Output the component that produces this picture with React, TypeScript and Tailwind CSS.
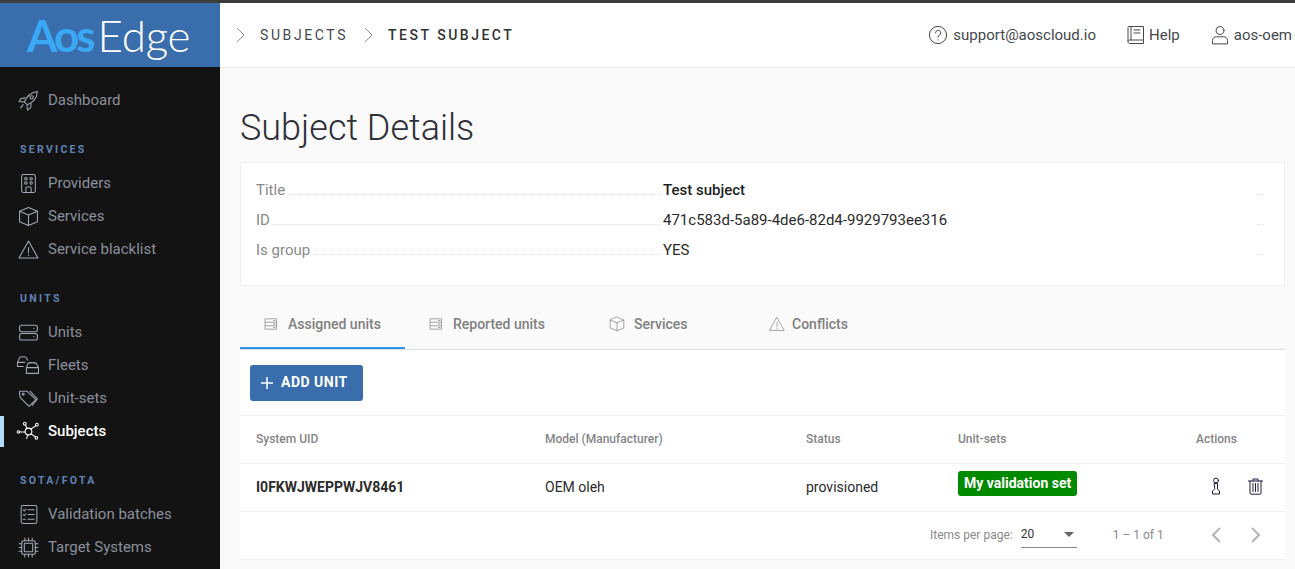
import { ReactNode } from 'react';

const stroke = {
  fill: 'none',
  stroke: 'currentColor',
  strokeWidth: 1,
  strokeLinecap: 'round' as const,
  strokeLinejoin: 'round' as const,
};

function Icon({ children, size = 20, className = '' }: { children: ReactNode; size?: number; className?: string }) {
  return (
    <svg width={size} height={size} viewBox="0 0 20 20" className={`shrink-0 overflow-visible ${className}`} {...stroke}>
      {children}
    </svg>
  );
}

const icons: Record<string, ReactNode> = {
  rocket: (
    <>
      <path d="M6 11.5 C8 6 12.5 2.5 18.5 1.5 C18 7.5 14.5 12 9 14 Z" />
      <path d="M6.5 7.5 L3 8 L1 11 L5.5 11.5" />
      <path d="M12.5 13 L12 17 L9 19 L8.5 14.5" />
      <circle cx="13" cy="7" r="1.6" />
      <path d="M5 14 L2.5 17" />
    </>
  ),
  building: (
    <>
      <rect x="3.5" y="1.5" width="13" height="17" rx="1.5" />
      <circle cx="7.5" cy="5.5" r="1.2" />
      <circle cx="12.5" cy="5.5" r="1.2" />
      <circle cx="7.5" cy="9.5" r="1.2" />
      <circle cx="12.5" cy="9.5" r="1.2" />
      <path d="M7.5 18.5 V14.5 C7.5 12.5 12.5 12.5 12.5 14.5 V18.5" />
    </>
  ),
  box: (
    <>
      <path d="M10 1.5 L18.5 5 V15 L10 18.5 L1.5 15 V5 Z" />
      <path d="M1.5 5 L10 8.5 L18.5 5 M10 8.5 V18.5" />
    </>
  ),
  warning: (
    <>
      <path d="M10 2 L19 18 H1 Z" />
      <path d="M10 8 V13 M10 15.2 V15.6" />
    </>
  ),
  units: (
    <>
      <rect x="1.5" y="3" width="17" height="6.2" rx="2" />
      <rect x="1.5" y="11" width="17" height="6.2" rx="2" />
      <path d="M15 6 H15.4 M15 14 H15.4" />
    </>
  ),
  fleets: (
    <>
      <path d="M-0.5 11 V7 L1.5 2.5 C2 1.5 7.5 1.5 8 2.5 L9 5" />
      <path d="M-0.5 7 H6.5 M-0.5 11 H5" />
      <path d="M8 17.5 V12 L9.5 8 C10 7 17 7 17.5 8 L19.5 12 V17.5 H8 M8 12 H19.5" />
    </>
  ),
  tag: (
    <>
      <path d="M1.5 3 H8.5 L17 11 L10.5 17.5 L2.5 9.5 C1.5 8 1.5 5 1.5 3 Z" />
      <path d="M11.5 3 L18.5 10.5 L13.5 16.5" />
      <circle cx="5" cy="6" r="0.9" />
    </>
  ),
  subjects: (
    <>
      <circle cx="10" cy="10" r="3.2" />
      <circle cx="6.5" cy="2.5" r="1.3" />
      <circle cx="18" cy="3.5" r="1.3" />
      <circle cx="0.4" cy="10.5" r="1.2" />
      <circle cx="17.5" cy="16" r="1.3" />
      <path d="M7 3.8 L8.7 7.2 M17 4.5 L12.3 7.8 M1.7 10.4 H6.8 M16.5 15 L12.4 12.2 M9.5 13.2 L8.2 16.6" />
    </>
  ),
  checklist: (
    <>
      <rect x="3" y="1.5" width="15" height="17" rx="1.5" />
      <path d="M5 5.5 L6 6.5 L7.5 4.8 M9.5 5.5 H15.5 M5 10 L6 11 L7.5 9.3 M9.5 10 H15.5 M5 14.5 H7 M9.5 14.5 H15.5" />
    </>
  ),
  chip: (
    <>
      <rect x="3.5" y="3.5" width="13" height="13" rx="2" />
      <rect x="6" y="6" width="8" height="8" rx="0.5" />
      <path d="M6.5 1 V3.5 M10 1 V3.5 M13.5 1 V3.5 M6.5 16.5 V19 M10 16.5 V19 M13.5 16.5 V19 M1 6.5 H3.5 M1 10 H3.5 M1 13.5 H3.5 M16.5 6.5 H19 M16.5 10 H19 M16.5 13.5 H19" />
    </>
  ),
  server: (
    <>
      <rect x="3" y="3.5" width="14" height="13" />
      <path d="M3 7.8 H17 M3 12.2 H17 M13 5.7 H15 M13 10 H15 M13 14.4 H15" />
    </>
  ),
};

function NavItem({ icon, label, active }: { icon: string; label: string; active?: boolean }) {
  return (
    <div className="relative flex h-[33px] items-center pl-[18px]">
      {active && <div className="absolute left-0 top-[1px] h-[31px] w-1 bg-[#b3dcfb]" />}
      <span className={active ? 'w-[30px] text-white' : 'w-[30px] text-[#a2a8b4]'}>
        <Icon size={21}>{icons[icon]}</Icon>
      </span>
      <span className={active ? 'text-[15px] font-medium text-white' : 'text-[15px] text-[#8b909c]'}>{label}</span>
    </div>
  );
}

function NavLabel({ text, className }: { text: string; className: string }) {
  return <div className={`pl-5 text-[10.5px] font-bold leading-4 tracking-[2.3px] text-[#6184b5] ${className}`}>{text}</div>;
}

function Sidebar() {
  return (
    <aside className="flex w-[220px] shrink-0 flex-col bg-[#131313]">
      <div className="flex h-16 items-center gap-[5px] bg-[#3a6dab] pl-[27px] text-[44px] leading-none font-['Lato',sans-serif]">
        <span className="font-bold tracking-[-3px] text-[#3aa8f5]">Aos</span>
        <span className="font-light tracking-[-0.3px] text-white">Edge</span>
      </div>
      <div className="mt-[17px]">
        <NavItem icon="rocket" label="Dashboard" />
      </div>
      <NavLabel text="SERVICES" className="mt-[25px] mb-[9px]" />
      <NavItem icon="building" label="Providers" />
      <NavItem icon="box" label="Services" />
      <NavItem icon="warning" label="Service blacklist" />
      <NavLabel text="UNITS" className="mt-[25px] mb-[9px]" />
      <NavItem icon="units" label="Units" />
      <NavItem icon="fleets" label="Fleets" />
      <NavItem icon="tag" label="Unit-sets" />
      <NavItem icon="subjects" label="Subjects" active />
      <NavLabel text="SOTA/FOTA" className="mt-[25px] mb-[9px]" />
      <NavItem icon="checklist" label="Validation batches" />
      <NavItem icon="chip" label="Target Systems" />
    </aside>
  );
}

function TopBar() {
  return (
    <header className="flex h-[65px] shrink-0 items-center border-b border-[#e6e6e6] bg-white pl-[14px] text-[#45484d]">
      <svg width="14" height="16" viewBox="0 0 14 16" className="text-[#8e8e8e]" {...stroke}>
        <path d="M3.5 1.5 L10 8 L3.5 14.5" />
      </svg>
      <span className="ml-[12px] text-[14px] tracking-[2.6px]">SUBJECTS</span>
      <svg width="14" height="16" viewBox="0 0 14 16" className="ml-[14px] text-[#8e8e8e]" {...stroke}>
        <path d="M3.5 1.5 L10 8 L3.5 14.5" />
      </svg>
      <span className="ml-[12px] text-[14px] font-medium tracking-[2.5px] text-[#333]">TEST SUBJECT</span>
      <div className="ml-auto flex items-center text-[15px]">
        <Icon size={20}>
          <circle cx="10" cy="10" r="8.6" />
          <path d="M7.5 7.8 C7.5 4.5 12.7 4.5 12.7 7.8 C12.7 10 10 10 10 12.2 M10 14.8 V15" />
        </Icon>
        <span className="ml-[5px]">support@aoscloud.io</span>
        <Icon size={20} className="ml-[30px]">
          <path d="M2 16 V2.5 C2 1.8 2.5 1.5 3 1.5 H17.5 V15 H3.5 C2.5 15 2 15.5 2 16.5 C2 17.8 2.8 18.5 3.5 18.5 H17.5 V15" />
          <path d="M5 1.5 V15 M8 5 H14 M8 8 H14" />
        </Icon>
        <span className="ml-[3px]">Help</span>
        <Icon size={20} className="ml-[30px]">
          <circle cx="10" cy="5.5" r="4" />
          <path d="M2.5 18.5 V15.5 C2.5 13 4.5 11.8 6.5 11.8 H13.5 C15.5 11.8 17.5 13 17.5 15.5 V18.5 Z" />
        </Icon>
        <span className="ml-[4px] mr-[3px]">aos-oem</span>
      </div>
    </header>
  );
}

function DetailRow({ label, value, bold }: { label: string; value: string; bold?: boolean }) {
  return (
    <div className="flex h-[30px] items-center text-[15px]">
      <div className="flex w-[407px] shrink-0 items-center">
        <span className="text-[#8a8a8a]">{label}</span>
        <span className="mx-[3px] mt-[9px] h-0 flex-1 border-b border-dotted border-[#dcdcdc]" />
      </div>
      <span className={bold ? 'font-medium text-[#1f1f1f]' : 'text-[#2b2b2b]'}>{value}</span>
      <span className="mr-[20px] ml-auto mt-[9px] w-[6px] border-b border-dotted border-[#dcdcdc]" />
    </div>
  );
}

function Tab({ icon, label, width, pad, gap, active }: { icon: string; label: string; width: string; pad: string; gap: string; active?: boolean }) {
  return (
    <div className={`flex h-[48px] items-center border-b-2 ${pad} ${width} ${active ? 'border-[#2f96ea]' : 'border-transparent'}`}>
      <Icon size={16} className="text-[#8f8f8f]">{icons[icon]}</Icon>
      <span className={`text-[14px] font-medium text-[#808080] ${gap}`}>{label}</span>
    </div>
  );
}

function UnitsTable() {
  return (
    <div className="bg-white">
      <div className="flex h-[66px] items-center border-b border-[#eeeeee] pl-[10px]">
        <button className="flex h-9 w-[113px] items-center gap-2 rounded-[3px] bg-[#3a6dab] pl-[11px] text-[14px] font-bold tracking-[0.5px] text-white">
          <svg width="12" height="12" viewBox="0 0 12 12" fill="none" stroke="currentColor" strokeWidth="1.5">
            <path d="M6 0 V12 M0 6 H12" />
          </svg>
          ADD UNIT
        </button>
      </div>
      <div className="grid h-[48px] grid-cols-[305px_261px_152px_238px_1fr] items-center border-b border-[#eeeeee] pb-[2px] pl-[16px] text-[12px] font-medium text-[#858585]">
        <span>System UID</span>
        <span className="-ml-[16px]">Model (Manufacturer)</span>
        <span className="-ml-[16px]">Status</span>
        <span className="-ml-[16px]">Unit-sets</span>
        <span className="-ml-[16px]">Actions</span>
      </div>
      <div className="grid h-[48px] grid-cols-[305px_261px_152px_238px_1fr] items-center border-b border-[#eeeeee] pl-[16px] text-[14px] text-[#2b2b2b]">
        <span className="font-bold">I0FKWJWEPPWJV8461</span>
        <span className="-ml-[16px]">OEM oleh</span>
        <span className="-ml-[16px]">provisioned</span>
        <span className="-ml-[16px] -mt-[3px]">
          <span className="inline-block -translate-y-[3px] rounded-[3px] bg-[#008a00] px-[6px] text-[14px] font-bold leading-[25px] text-white">
            My validation set
          </span>
        </span>
        <div className="-ml-[16px] flex items-center gap-[25px] pl-[13px] pb-[3px] text-[#1c1c3a]">
          <svg width="14" height="18" viewBox="0 0 14 18" {...stroke}>
            <circle cx="7" cy="3.5" r="2.4" />
            <path d="M5.5 6.5 H8.5 V12 L10.5 14 V17 H3.5 V14 L5.5 12 Z" />
          </svg>
          <svg width="15" height="17" viewBox="0 0 15 17" {...stroke}>
            <path d="M0.5 3 H14.5 M5 3 V1 H10 V3 M2 3 V15 C2 15.8 2.5 16.2 3 16.2 H12 C12.5 16.2 13 15.8 13 15 V3 M5 5.5 V13.5 M7.5 5.5 V13.5 M10 5.5 V13.5" />
          </svg>
        </div>
      </div>
      <div className="flex h-[48px] items-center border-b border-[#eeeeee] pb-[2px] pl-[690px] text-[12px] text-[#8a8a8a]">
        <span>Items per page:</span>
        <div className="ml-2 flex h-[26px] w-[56px] items-center justify-between border-b border-[#8a8a8a] pr-[3px] text-[#333]">
          <span>20</span>
          <span className="h-0 w-0 border-x-[5px] border-t-[5px] border-x-transparent border-t-[#666]" />
        </div>
        <span className="ml-[36px]">1 – 1 of 1</span>
        <svg width="14" height="16" viewBox="0 0 14 16" className="ml-[45px] text-[#b5b5b5]" fill="none" stroke="currentColor" strokeWidth="2">
          <path d="M11 1 L4 8 L11 15" />
        </svg>
        <svg width="14" height="16" viewBox="0 0 14 16" className="ml-[26px] text-[#b5b5b5]" fill="none" stroke="currentColor" strokeWidth="2">
          <path d="M3 1 L10 8 L3 15" />
        </svg>
      </div>
    </div>
  );
}

export default function App() {
  return (
    <div className="h-screen w-full overflow-hidden bg-[#fafafa] font-['Roboto',sans-serif]">
      <div className="h-[3px] bg-[#3c3c3c]" />
      <div className="flex h-[566px]">
        <Sidebar />
        <main className="flex min-w-0 flex-1 flex-col">
          <TopBar />
          <div className="pl-5 pr-[10px]">
            <h1 className="mt-9 text-[36px] font-light leading-[48px] text-[#2f2f38]">Subject Details</h1>
            <section className="mt-[10px] h-[124px] border border-[#eeeeee] bg-white pl-[15px] pt-[12px]">
              <DetailRow label="Title" value="Test subject" bold />
              <DetailRow label="ID" value="471c583d-5a89-4de6-82d4-9929793ee316" />
              <DetailRow label="Is group" value="YES" />
            </section>
            <nav className="mt-[15px] flex h-[49px] border-b border-[#dcdcdc]">
              <Tab icon="server" label="Assigned units" width="w-[165px]" pad="pl-[23px]" gap="ml-[9px]" active />
              <Tab icon="server" label="Reported units" width="w-[165px]" pad="pl-[23px]" gap="ml-[9px]" />
              <Tab icon="box" label="Services" width="w-[162px]" pad="pl-[39px]" gap="ml-[9px]" />
              <Tab icon="warning" label="Conflicts" width="w-[160px]" pad="pl-[37px]" gap="ml-[7px]" />
            </nav>
            <UnitsTable />
          </div>
        </main>
      </div>
    </div>
  );
}
